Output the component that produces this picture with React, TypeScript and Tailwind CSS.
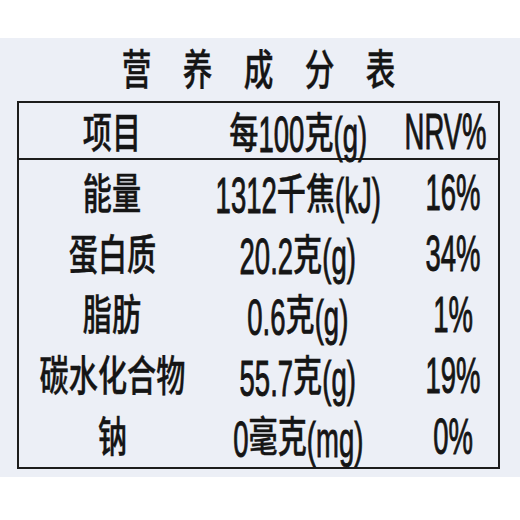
import React from 'react'

const rows = [
  ['能量', '1312千焦(kJ)', '16%'],
  ['蛋白质', '20.2克(g)', '34%'],
  ['脂肪', '0.6克(g)', '1%'],
  ['碳水化合物', '55.7克(g)', '19%'],
  ['钠', '0毫克(mg)', '0%'],
]

const isCjk = (c: string) => /[\u3400-\u9fff]/.test(c)

// split a label into runs of CJK / latin so each can get its own glyph size
function split(s: string) {
  const runs: { cjk: boolean; text: string }[] = []
  for (const c of s) {
    const k = isCjk(c)
    const last = runs[runs.length - 1]
    if (last && last.cjk === k) last.text += c
    else runs.push({ cjk: k, text: c })
  }
  return runs
}

function Label({ text }: { text: string }) {
  return (
    <span className="inline-block scale-x-[0.55] whitespace-nowrap font-['Liberation_Sans',Arial,sans-serif] text-[50px] leading-none text-[#151515] [-webkit-text-stroke:1px_#151515]">
      {split(text).map((r, i) =>
        r.cjk ? (
          <span
            key={i}
            className="inline-block scale-y-[0.8] font-['Noto_Sans_CJK_SC',sans-serif] text-[53px] font-medium leading-none [-webkit-text-stroke:0.5px_#151515]"
          >
            {r.text}
          </span>
        ) : (
          <span key={i}>{r.text}</span>
        )
      )}
    </span>
  )
}

function Row({ cells, header }: { cells: string[]; header?: boolean }) {
  return (
    <div
      className={`grid grid-cols-[186px_186px_107px] ${header ? 'h-[57px] border-b-2 border-[#1c1c1c]' : 'h-[61px]'}`}
    >
      <div className="flex items-center justify-center">
        <Label text={cells[0]} />
      </div>
      <div className="flex items-center justify-center">
        <Label text={cells[1]} />
      </div>
      <div className={`flex items-center justify-center ${header ? 'pl-[3px]' : 'pl-[17px]'}`}>
        <Label text={cells[2]} />
      </div>
    </div>
  )
}

export default function App() {
  return (
    <div className="w-[520px] h-[520px] bg-white pt-[38px]">
      <div className="h-[439px] bg-[#eceff6] pl-[17px] pr-[20px]">
        <div className="h-[63px] pb-[6px] flex items-center justify-center gap-[8px]">
          {['营', '养', '成', '分', '表'].map((c) => (
            <span
              key={c}
              className="inline-block scale-x-[0.56] scale-y-[0.8] font-['Noto_Sans_CJK_SC',sans-serif] text-[53px] font-medium leading-none text-[#151515] [-webkit-text-stroke:0.5px_#151515]"
            >
              {c}
            </span>
          ))}
        </div>

        <div className="border-2 border-[#1c1c1c]">
          <Row cells={['项目', '每100克(g)', 'NRV%']} header />
          <div className="pt-[2px]">
            {rows.map((r) => (
              <Row key={r[0]} cells={r} />
            ))}
          </div>
        </div>
      </div>
    </div>
  )
}
